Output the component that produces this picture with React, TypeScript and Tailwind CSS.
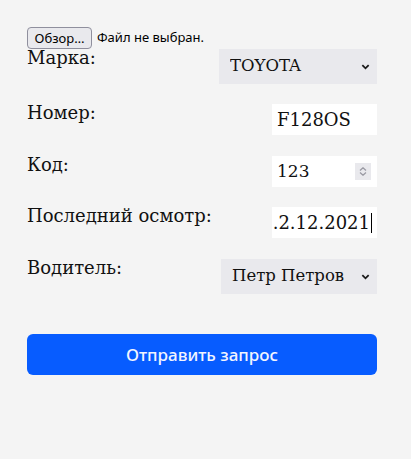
import { useState } from "react";

const serif = "font-['DejaVu_Serif',serif]";

const Chevron = () => (
  <svg viewBox="0 0 10 6" className="h-[6px] w-[9px]" fill="none" stroke="#1a1a1a" strokeWidth="2" aria-hidden>
    <path d="M1.5 1l3.5 3.5L8.5 1" />
  </svg>
);

function FakeSelect({ value, options, width }: { value: string; options: string[]; width: string }) {
  const [v, setV] = useState(value);
  return (
    <div className={`relative h-[35px] ${width}`}>
      <select
        value={v}
        onChange={(e) => setV(e.target.value)}
        className={`h-full w-full appearance-none rounded-none bg-[#e9e9ed] pl-[11px] text-[16.5px] text-[#111] outline-none ${serif}`}
      >
        {options.map((o) => (
          <option key={o}>{o}</option>
        ))}
      </select>
      <span className="pointer-events-none absolute right-[7px] top-[15px]">
        <Chevron />
      </span>
    </div>
  );
}

function Row({ label, children, className = "" }: { label: string; children: React.ReactNode; className?: string }) {
  return (
    <div className={`flex items-start justify-between ${className}`}>
      <label className={`text-[18px] leading-[18px] text-[#111] ${serif}`}>{label}</label>
      {children}
    </div>
  );
}

export default function App() {
  return (
    <div className="min-h-[459px] bg-[#f4f4f4] pl-[27px] pt-[27px]">
      <div className="w-[350px]">
        <div className="flex h-[22px] items-center gap-[5px] font-['Noto_Sans',sans-serif] text-[13px] text-black">
          <button
            type="button"
            className="h-[22px] w-[65px] rounded-[4px] border border-[#8f8f9d] bg-[#e9e9ed] leading-none"
          >
            Обзор…
          </button>
          <span>Файл не выбран.</span>
        </div>

        <Row label="Марка:">
          <FakeSelect value="TOYOTA" options={["TOYOTA", "BMW", "LADA"]} width="w-[158px]" />
        </Row>

        <Row label="Номер:" className="mt-[20px]">
          <input
            defaultValue="F128OS"
            className={`h-[31px] w-[105px] bg-white pl-[5px] text-[18px] text-[#111] outline-none ${serif}`}
          />
        </Row>

        <Row label="Код:" className="mt-[21px]">
          <div className="flex h-[31px] w-[105px] items-center bg-white pl-[5px] pr-[6px]">
            <span className={`flex-1 text-[17px] text-[#111] ${serif}`}>123</span>
            <span className="flex h-[17px] w-[16px] flex-col items-center justify-center gap-[1px] bg-[#e9e9ed]">
              <svg viewBox="0 0 8 4" className="h-[4px] w-[8px]" fill="none" stroke="#9a9aa3" strokeWidth="1.3">
                <path d="M1 3.5L4 0.8l3 2.7" />
              </svg>
              <svg viewBox="0 0 8 4" className="h-[4px] w-[8px]" fill="none" stroke="#9a9aa3" strokeWidth="1.3">
                <path d="M1 0.5L4 3.2l3-2.7" />
              </svg>
            </span>
          </div>
        </Row>

        <Row label="Последний осмотр:" className="mt-[20px]">
          <div className="flex h-[31px] w-[105px] items-center justify-end bg-white pr-[5px]">
            <span className={`whitespace-nowrap text-[18px] text-[#111] ${serif}`}>.2.12.2021</span>
            <span className="ml-[1px] h-[20px] w-px shrink-0 bg-black" />
          </div>
        </Row>

        <Row label="Водитель:" className="mt-[21px]">
          <FakeSelect value="Петр Петров" options={["Петр Петров", "Иван Иванов"]} width="w-[156px]" />
        </Row>

        <button
          type="button"
          className="mt-[40px] h-[41px] w-[350px] rounded-[6px] bg-[#075cff] font-['Noto_Sans',sans-serif] text-[17px] font-medium text-[#f2f5ff]"
        >
          Отправить запрос
        </button>
      </div>
    </div>
  );
}
